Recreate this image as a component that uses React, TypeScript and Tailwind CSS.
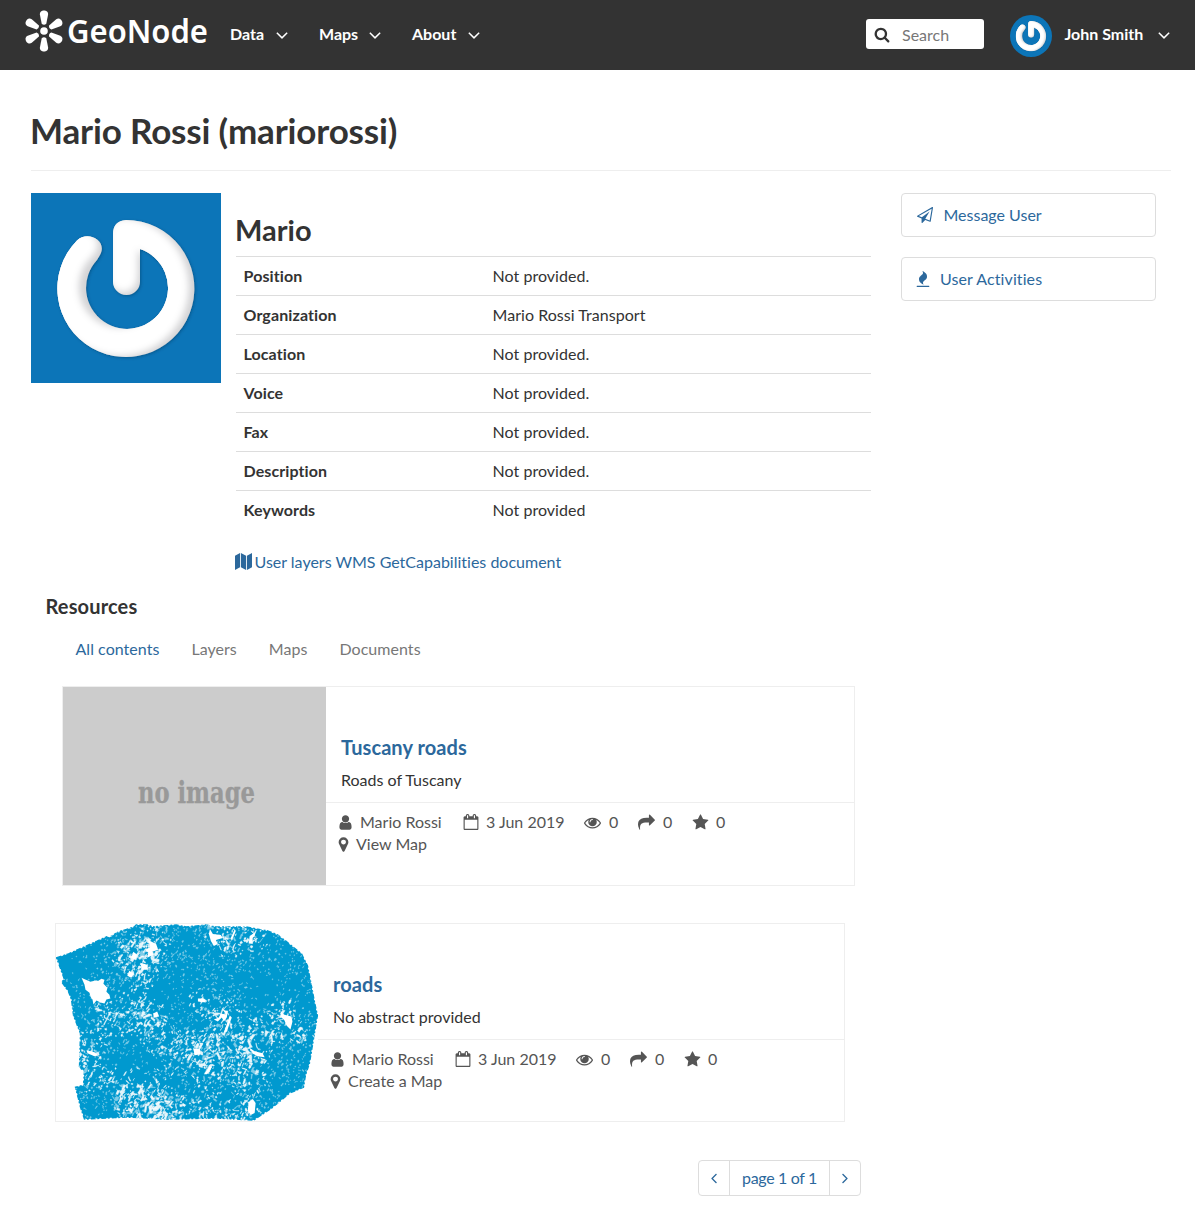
import React from 'react';

const ICONS = {
  search: 'M1216 832q0-185-131.5-316.5t-316.5-131.5-316.5 131.5-131.5 316.5 131.5 316.5 316.5 131.5 316.5-131.5 131.5-316.5zm512 832q0 52-38 90t-90 38q-54 0-90-38l-343-342q-179 124-399 124-143 0-273.5-55.5t-225-150-150-225-55.5-273.5 55.5-273.5 150-225 225-150 273.5-55.5 273.5 55.5 225 150 150 225 55.5 273.5q0 220-124 399l343 343q37 37 37 90z',
  star: 'M1728 647q0 22-26 48l-363 354 86 500q1 7 1 20 0 21-10.5 35.5t-30.5 14.5q-19 0-40-12l-449-236-449 236q-22 12-40 12-21 0-31.5-14.5t-10.5-35.5q0-6 2-20l86-500-364-354q-25-27-25-48 0-37 56-46l502-73 225-455q19-41 49-41t49 41l225 455 502 73q56 9 56 46z',
  user: 'M1536 1399q0 109-62.5 187t-150.5 78h-854q-88 0-150.5-78t-62.5-187q0-85 8.5-160.5t31.5-152 58.5-131 94-89 134.5-34.5q131 128 313 128t313-128q76 0 134.5 34.5t94 89 58.5 131 31.5 152 8.5 160.5zm-256-887q0 159-112.5 271.5t-271.5 112.5-271.5-112.5-112.5-271.5 112.5-271.5 271.5-112.5 271.5 112.5 112.5 271.5z',
  eye: 'M1664 960q-152-236-381-353 61 104 61 225 0 185-131.5 316.5t-316.5 131.5-316.5-131.5-131.5-316.5q0-121 61-225-229 117-381 353 133 205 333.5 326.5t434.5 121.5 434.5-121.5 333.5-326.5zm-720-384q0-20-14-34t-34-14q-125 0-214.5 89.5t-89.5 214.5q0 20 14 34t34 14 34-14 14-34q0-86 61-147t147-61q20 0 34-14t14-34zm848 384q0 34-20 69-140 230-376.5 368.5t-499.5 138.5-499.5-139-376.5-368q-20-35-20-69t20-69q140-229 376.5-368t499.5-139 499.5 139 376.5 368q20 35 20 69z',
  share: 'M1792 640q0 26-19 45l-512 512q-19 19-45 19t-45-19-19-45v-256h-224q-98 0-175.5 6t-154 21.5-133 42.5-105.5 69.5-80 101-48.5 138.5-17.5 181q0 55 5 123 0 6 2.5 23.5t2.5 26.5q0 15-8.5 25t-23.5 10q-16 0-28-17-7-9-13-22t-13.5-30-10.5-24q-127-285-127-451 0-199 53-333 162-403 875-403h224v-256q0-26 19-45t45-19 45 19l512 512q19 19 19 45z',
  marker: 'M1152 640q0-106-75-181t-181-75-181 75-75 181 75 181 181 75 181-75 75-181zm256 0q0 109-33 179l-364 774q-16 33-47.5 52t-67.5 19-67.5-19-46.5-52l-365-774q-33-70-33-179 0-212 150-362t362-150 362 150 150 362z',
  calendar: 'M192 1664h1408v-1024h-1408v1024zm384-1216v-288q0-14-9-23t-23-9h-64q-14 0-23 9t-9 23v288q0 14 9 23t23 9h64q14 0 23-9t9-23zm768 0v-288q0-14-9-23t-23-9h-64q-14 0-23 9t-9 23v288q0 14 9 23t23 9h64q14 0 23-9t9-23zm384-64v1280q0 52-38 90t-90 38h-1408q-52 0-90-38t-38-90v-1280q0-52 38-90t90-38h128v-96q0-66 47-113t113-47h64q66 0 113 47t47 113v96h384v-96q0-66 47-113t113-47h64q66 0 113 47t47 113v96h128q52 0 90 38t38 90z',
  down: 'M1395 736q0 13-10 23l-466 466q-10 10-23 10t-23-10l-466-466q-10-10-10-23t10-23l50-50q10-10 23-10t23 10l393 393 393-393q10-10 23-10t23 10l50 50q10 10 10 23z',
  plane: 'M1764 11q33 24 27 64l-256 1536q-5 29-32 45-14 8-31 8-11 0-24-5l-527-215-298 327q-18 21-47 21-14 0-23-4-19-7-30-23.500t-11-36.500v-452l-472-193q-37-14-40-55-3-39 32-59l1664-960q35-21 68 2zm-342 1499l221-1323-1434 827 336 137 863-639-478 797z',
  map: 'M0 290L530 10V1510L0 1785ZM620 10L1170 285V1785L620 1510ZM1260 285L1792 10V1510L1260 1785Z',
  fire: 'M1600 1696v64q0 13-9.5 22.5t-22.5 9.5h-1344q-13 0-22.5-9.5t-9.5-22.5v-64q0-13 9.5-22.5t22.5-9.5h1344q13 0 22.5 9.5t9.5 22.5zm-256-1056q0 78-24.5 144t-64 112.5-87.5 88-96 77.5-87.5 72-64 81.5-24.5 96.5q0 96 67 224l-4-1 1 1q-90-41-160-83t-138.5-100-113.5-122.5-72.5-150.5-27.5-184q0-78 24.5-144t64-112.5 87.5-88 96-77.5 87.5-72 64-81.5 24.5-96.5q0-94-66-224l3 1-1-1q90 41 160 83t138.5 100 113.5 122.5 72.5 150.5 27.5 184z',
};

function Icon({ name, className }: { name: keyof typeof ICONS; className: string }) {
  return (
    <svg viewBox="0 0 1792 1792" fill="currentColor" className={className}>
      <path d={ICONS[name]} />
    </svg>
  );
}

function Logo() {
  return (
    <svg viewBox="0 -10 190 64" className="h-[64px] w-[190px] shrink-0 fill-white">
      {[0, 60, 120, 180, 240, 300].map((a) => (
        <path key={a} transform={`rotate(${a} 20 21)`} d="M17.700 13.800L15.900 4.500C15.400-.9 24.600-.9 24.100 4.500L22.300 13.800Q20 15.800 17.700 13.800Z" />
      ))}
      <circle cx="20" cy="21" r="3.8" />
      <text x="43" y="33.200" fontFamily="Noto Sans" fontWeight="600" fontSize="32" textLength="141" lengthAdjust="spacingAndGlyphs">GeoNode</text>
    </svg>
  );
}

function PowerAvatar({ id, className }: { id: string; className: string }) {
  const shape = 'M56 55A55 55 0 1 0 96 42L95.500 88';
  return (
    <svg viewBox="0 0 190 190" className={className}>
      <defs>
        <clipPath id={id}>
          <path d="M95 27A68.500 68.500 0 1 1 46 47.500C57 37 77 48 69 62L66 67A41 41 0 1 0 109 56V88.500A13.500 13.500 0 0 1 82 88.500V41Q82 28 95 27Z" />
        </clipPath>
        <filter id={`${id}-blur`} x="-20%" y="-20%" width="140%" height="140%">
          <feGaussianBlur stdDeviation="4" />
        </filter>
        <filter id={`${id}-drop`}>
          <feDropShadow dx="1" dy="1" stdDeviation="1.500" floodColor="#003a66" floodOpacity="0.5" />
        </filter>
      </defs>
      <rect width="190" height="190" fill="#0c75b8" />
      <g filter={`url(#${id}-drop)`}>
        <g clipPath={`url(#${id})`}>
          <rect width="190" height="190" fill="#d2d2d4" />
          <path d={shape} transform="translate(-3.500 -3)" fill="none" stroke="#fff" strokeWidth="27" strokeLinecap="round" strokeLinejoin="round" filter={`url(#${id}-blur)`} />
          <path d={shape} transform="translate(-3 -3)" fill="none" stroke="#fff" strokeWidth="20" strokeLinecap="round" strokeLinejoin="round" filter={`url(#${id}-blur)`} />
        </g>
      </g>
    </svg>
  );
}

const AREA = '0,34 12,30 30,22 50,13 52,14 62,8 78,3 80,1 92,1 96,3 120,1 130,3 150,1 160,3 190,3 212,7 222,11 230,17 246,30 252,42 254,52 256,62 259,78 262,92 258,116 254,140 250,152 248,164 234,170 216,185 198,197 160,195 110,196 70,194 28,196 24,184 19,164 27,162 28,148 23,144 24,110 17,92 15,76 12,68 5,58 8,56';

// Sparser parts of the road network: centre x, centre y, radius, openness.
const SPARSE: number[][] = [
  [78, 30, 18, 3], [96, 20, 15, 3], [88, 44, 14, 2], [165, 10, 14, 2], [178, 20, 14, 1.5], [200, 14, 12, 2], [60, 92, 22, 1.6], [88, 82, 16, 1.6],
  [98, 100, 16, 1.8], [146, 75, 12, 1.6], [168, 92, 16, 2.4], [166, 124, 20, 2], [115, 128, 22, 1.4], [145, 128, 16, 1.8],
  [195, 125, 20, 2], [35, 122, 16, 1.6], [35, 150, 16, 2.2], [70, 160, 15, 2], [92, 176, 18, 2.8], [112, 187, 18, 2.4],
  [155, 145, 16, 1.5], [150, 184, 16, 2], [185, 186, 16, 2.4], [230, 86, 12, 1.8], [245, 112, 12, 2], [196, 150, 16, 1.6], [210, 106, 14, 1.8], [68, 180, 12, 2],
];

function buildGaps(): { soft: string; bold: string } {
  let s = 77;
  const rnd = () => {
    s = (s * 16807) % 2147483647;
    return s / 2147483647;
  };
  let soft = '';
  let bold = '';
  for (let i = 0; i < 12000; i++) {
    const x = rnd() * 262;
    const y = rnd() * 198;
    let w = 0;
    for (const [cx, cy, r, k] of SPARSE) {
      w += k * 0.36 * Math.exp(-((x - cx) ** 2 + (y - cy) ** 2) / (r * r));
    }
    w = Math.min(1, w);
    const core = Math.min(1, Math.exp(-((x - 112) ** 2 / 900 + (y - 64) ** 2 / 200)) + Math.exp(-((x - 75) ** 2 + (y - 145) ** 2) / 320) + Math.exp(-((x - 18) ** 2 + (y - 46) ** 2) / 500) + Math.exp(-((x - 215) ** 2 / 700 + (y - 60) ** 2 / 500)));
    const pick = rnd();
    const angle = rnd() < 0.6 ? rnd() * Math.PI : 1.9 + rnd() * 0.3;
    const len = 0.7 + rnd() * rnd() * (2.4 + 7 * w);
    const t = 0.4 + rnd() * rnd() * (0.9 + 2.6 * w);
    const skew = rnd() * 2 - 1;
    if (pick > (0.24 + w * 0.3) * (1 - core * 0.8)) continue;
    const c = Math.cos(angle);
    const n = Math.sin(angle);
    const piece = `M${x.toFixed(1)} ${y.toFixed(1)}q${(c * len * 0.5 + n * skew).toFixed(1)} ${(n * len * 0.5 - c * skew).toFixed(1)} ${(c * len).toFixed(1)} ${(n * len).toFixed(1)}l${(-n * t).toFixed(1)} ${(c * t).toFixed(1)}l${(-c * len * 0.8).toFixed(1)} ${(-n * len * 0.8).toFixed(1)}z`;
    if (w > 0.2 && pick < 0.08 + w * 0.24) bold += piece;
    else soft += piece;
  }
  return { soft, bold };
}
const GAPS = buildGaps();

function RoadsThumb() {
  return (
    <svg viewBox="0 0 263 198" className="h-full w-[263px] shrink-0">
      <polygon points={AREA} fill="#0099cf" stroke="#0099cf" strokeWidth="1.500" strokeDasharray="5 2 2 1.500" />
      <path d={GAPS.soft} fill="#fff" stroke="#fff" strokeWidth="0.400" opacity="0.5" />
      <path d={GAPS.bold} fill="#fff" stroke="#fff" strokeWidth="0.400" opacity="0.9" />
      <g fill="#fff">
        <path d="M25 54L27 55 34 58 38 57 42 57 45 55 48 56 47 60 51 64 50 68 53 71 54 75 50 76 48 80 44 79 40 77 37 81 36 76 34 73 33 69 29 66 28 61Z" />
        <path d="M154 5L157 10 165 11 167 14 160 16 162 20 158 22 155 17 153 10Z" />
        <path d="M92 16L100 20 102 26 96 28 97 31 91 34 92 29 89 26 94 23Z" />
        <path d="M77 28L81 31 79 36 75 34Z" /><path d="M84 39L91 41 92 46 86 46Z" /><path d="M73 47L78 50 75 54 71 52Z" />
        <path d="M194 12L200 8 199 12 197 14 197 20 193 19Z" /><path d="M175 14L179 5 180 7 176 17Z" />
        <path d="M158 96L163 94 165 90 170 91 167 86 172 88 171 94 168 98 166 94 162 98Z" />
        <path d="M168 109L174 92 176 94 171 108Z" />
        <path d="M225 87L228 91 236 93 237 98 235 106 231 102 229 97 226 94Z" />
        <path d="M193 124L199 128 207 130 209 134 202 133 197 130Z" />
        <path d="M193 179L197 176 200 180 199 190 195 192 192 188Z" />
        <path d="M30 127L38 129 42 132 38 133 31 130Z" />
        <path d="M97 90L101 88 103 93 98 94Z" /><path d="M137 125L144 126 145 131 139 132Z" /><path d="M142 75L148 75 150 79 142 78Z" />
        <path d="M148 151L154 143 156 144 151 151Z" />
      </g>
    </svg>
  );
}

function NavItem({ label, className }: { label: string; className: string }) {
  return (
    <a className={`flex items-center justify-between ${className}`}>
      {label}
      <Icon name="down" className="mt-[2px] h-[20px] w-[20px]" />
    </a>
  );
}

const FIELDS = [
  ['Position', 'Not provided.'],
  ['Organization', 'Mario Rossi Transport'],
  ['Location', 'Not provided.'],
  ['Voice', 'Not provided.'],
  ['Fax', 'Not provided.'],
  ['Description', 'Not provided.'],
  ['Keywords', 'Not provided'],
];

function Meta({ action }: { action: string }) {
  return (
    <div className="border-t border-[#eee] pt-[8px] pl-[12px] leading-[22px] text-[#555]">
      <div className="flex h-[22px] items-center">
        <Icon name="user" className="-ml-px mr-[6px] h-[17px] w-[17px]" />
        <span className="w-[103px]">Mario Rossi</span>
        <Icon name="calendar" className="mr-[7px] h-[16px] w-[16px]" />
        <span className="w-[98px]">3 Jun 2019</span>
        <Icon name="eye" className="mr-[8px] h-[17px] w-[17px]" />
        <span className="w-[29px]">0</span>
        <Icon name="share" className="mr-[8px] h-[17px] w-[17px]" />
        <span className="w-[29px]">0</span>
        <Icon name="star" className="mr-[7px] h-[17px] w-[17px]" />
        <span>0</span>
      </div>
      <div className="flex h-[22px] items-center">
        <Icon name="marker" className="-ml-[3px] mr-[4px] h-[17px] w-[17px]" />
        <span>{action}</span>
      </div>
    </div>
  );
}

function Resource({ title, abstract, action, thumb, className }: { title: string; abstract: string; action: string; thumb: React.ReactNode; className: string }) {
  return (
    <article className={`flex border border-[#eee] ${className}`}>
      {thumb}
      <div className="min-w-0 flex-1 pt-[47px]">
        <h4 className="pl-[15px] text-[20px] font-bold leading-[26px] tracking-[0.07px] text-[#2c689c]">{title}</h4>
        <p className="mt-[8px] h-[34px] pl-[15px] leading-[23px]">{abstract}</p>
        <Meta action={action} />
      </div>
    </article>
  );
}

export default function App() {
  return (
    <div className="h-[1216px] w-[1195px] overflow-hidden bg-white font-[Lato,sans-serif] text-[16px] leading-[23px] text-[#333] [font-variant-ligatures:no-common-ligatures]">
      <header className="flex h-[70px] bg-[#333] pl-[24px] font-bold text-white">
        <Logo />
        <nav className="flex h-[67px] items-center pl-[16px]">
          <NavItem label="Data" className="mr-[27px] w-[62px]" />
          <NavItem label="Maps" className="mr-[27px] w-[66px]" />
          <NavItem label="About" className="w-[72px]" />
        </nav>
        <div className="ml-auto flex pr-[21.500px]">
          <div className="mt-[19px] flex h-[30px] w-[118px] items-center rounded-[3px] bg-white pl-[8px] font-normal text-[#777]">
            <Icon name="search" className="mr-[12px] h-[17px] w-[16px] text-[#333]" />
            <span className="pt-px">Search</span>
          </div>
          <PowerAvatar id="nav-avatar" className="mt-[15px] ml-[26px] h-[42px] w-[42px] rounded-full" />
          <div className="flex h-[67px] items-center pl-[12.500px]">
            <NavItem label="John Smith" className="w-[109px]" />
          </div>
        </div>
      </header>

      <main className="px-[31px]">
        <h2 className="mr-[-7px] h-[101px] border-b border-[#eee] pt-[37px] -indent-px text-[35px] font-bold leading-[46px] tracking-[-0.16px]">Mario Rossi (mariorossi)</h2>
        <div className="flex pt-[22px]">
          <div className="w-[840px]">
            <div className="flex h-[357px]">
              <PowerAvatar id="profile-avatar" className="mr-[15px] h-[190px] w-[190px] shrink-0" />
              <div className="flex-1 pt-[19px]">
                <h3 className="h-[44px] -indent-px text-[29px] font-bold leading-[36px]">Mario</h3>
                <table className="w-full">
                  <tbody>
                    {FIELDS.map(([k, v]) => (
                      <tr key={k} className="h-[39px] border-t border-[#ddd]">
                        <td className="w-[249px] pb-[2px] pl-[7.500px] font-bold tracking-[0.1px]">{k}</td>
                        <td className="pb-[2px] pl-[7.500px] tracking-[0.04px]">{v}</td>
                      </tr>
                    ))}
                  </tbody>
                </table>
              </div>
            </div>
            <a className="ml-[204px] flex items-center text-[#2c689c]">
              <Icon name="map" className="mr-[2.500px] h-[17px] w-[17px]" />
              User layers WMS GetCapabilities document
            </a>
            <h4 className="mt-[20px] pl-[14.500px] text-[20px] font-bold leading-[26px] tracking-[0.15px]">Resources</h4>
            <ul className="mt-[18px] flex gap-[32px] pl-[44.500px] tracking-[0.04px] text-[#777]">
              <li className="text-[#2c689c]">All contents</li>
              <li>Layers</li>
              <li>Maps</li>
              <li>Documents</li>
            </ul>
            <Resource
              className="mt-[26px] ml-[31px] h-[200px] w-[793px]"
              title="Tuscany roads"
              abstract="Roads of Tuscany"
              action="View Map"
              thumb={
                <div className="h-full w-[263px] shrink-0 bg-[#ccc]">
                  <svg viewBox="0 0 263 198" className="h-full w-full" fill="#999">
                    <text x="75" y="116" fontFamily="DejaVu Serif Condensed, DejaVu Serif" fontStretch="condensed" fontWeight="bold" fontSize="30.500" stroke="#999" strokeWidth="0.300" textLength="117" lengthAdjust="spacingAndGlyphs">no image</text>
                  </svg>
                </div>
              }
            />
            <Resource
              className="mt-[37px] ml-[24px] h-[199px] w-[790px]"
              title="roads"
              abstract="No abstract provided"
              action="Create a Map"
              thumb={<div className="h-full w-[262px] shrink-0"><RoadsThumb /></div>}
            />
            <div className="mt-[38px] ml-[667px] flex h-[36px] w-[163px] items-center rounded-[4px] border border-[#ddd] text-[#2c689c]">
              <button className="flex w-[30px] items-center justify-center"><Icon name="down" className="h-[17px] w-[17px] rotate-90" /></button>
              <span className="flex h-full flex-1 items-center justify-center border-x border-[#ddd] pb-[2px] tracking-[-0.35px]">page 1 of 1</span>
              <button className="flex w-[30px] items-center justify-center pr-[2px]"><Icon name="down" className="h-[17px] w-[17px] -rotate-90" /></button>
            </div>
          </div>
          <aside className="ml-[30px] flex w-[255px] flex-col gap-[20px] text-[#2c689c]">
            <a className="flex h-[44px] items-center rounded-[4px] border border-[#ddd] pb-[1px] pl-[15px]"><Icon name="plane" className="mt-px mr-[10.500px] h-[16px] w-[16px]" />Message User</a>
            <a className="flex h-[44px] items-center rounded-[4px] border border-[#ddd] pb-[1px] pl-[13px] tracking-[0.1px]"><Icon name="fire" className="mt-px mr-[9px] h-[16px] w-[16px]" />User Activities</a>
          </aside>
        </div>
      </main>
    </div>
  );
}
